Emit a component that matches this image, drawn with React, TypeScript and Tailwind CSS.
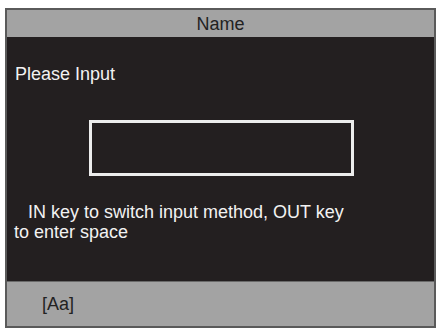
import React from "react";

export default function App() {
  return (
    <div className="w-[440px] h-[334px] bg-white pt-[8px] pl-[5px]" style={{ fontFamily: '"Liberation Sans", Arial, sans-serif' }}>
      <div className="w-[431px] h-[320px] border-2 border-[#5a5a5a] flex flex-col">
        <div className="h-[27px] bg-[#a3a3a3] flex items-center justify-center text-[18px] leading-[20px] text-[#222]">
          Name
        </div>
        <div className="h-[244px] bg-[#231f20] text-[#f2f2f2] text-[18px] leading-[20px] flex flex-col">
          <div className="pt-[27px] pl-[8px]">Please Input</div>
          <div className="mt-[36px] ml-[82px] w-[265px] h-[56px] border-[3px] border-[#ececec]" />
          <div className="mt-[26px] pl-[7px]">
            <span className="pl-[14px]">IN key to switch input method, OUT key</span>
            <br />
            to enter space
          </div>
        </div>
        <div className="flex-1 bg-[#a3a3a3] border-t border-[#6a6a6a] flex items-center pl-[35px] text-[18px] leading-[20px] text-[#222]">
          [Aa]
        </div>
      </div>
    </div>
  );
}
